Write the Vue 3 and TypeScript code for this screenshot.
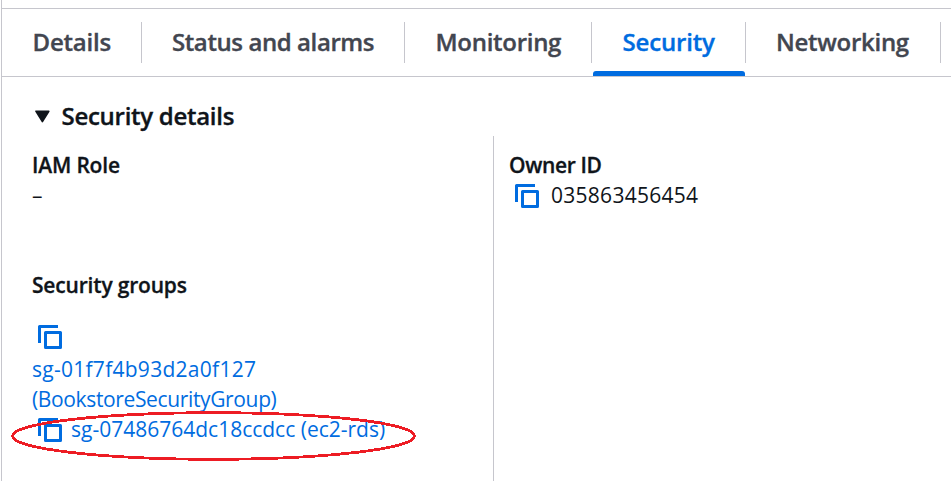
<script setup lang="ts">
import { defineComponent, h } from 'vue'

interface Tab {
  id: string
  label: string
}

const activeTab = 'security'
const tabs: Tab[] = [
  { id: 'details', label: 'Details' },
  { id: 'status', label: 'Status and alarms' },
  { id: 'monitoring', label: 'Monitoring' },
  { id: 'security', label: 'Security' },
  { id: 'networking', label: 'Networking' },
]

const CopyIcon = defineComponent(() => () =>
  h('svg', { width: 24, height: 24, viewBox: '0 0 24 24', fill: 'none', stroke: 'currentColor', 'stroke-width': 3, 'stroke-linejoin': 'round' }, [
    h('path', { d: 'M20 1.5H1.5V18' }),
    h('path', { d: 'M7.5 7.5h15v15h-15z' }),
  ]),
)
</script>

<template>
  <main class="panel">
    <nav class="tabs">
      <div v-for="tab in tabs" :key="tab.id" class="tab" :class="[tab.id, { active: tab.id === activeTab }]">
        <span class="tab-label">{{ tab.label }}</span>
      </div>
    </nav>

    <section class="content">
      <h2 class="section-title">
        <svg class="caret" width="15" height="13" viewBox="0 0 15 13">
          <path d="M1 1.3h12.8L7.4 11.6z" fill="#0f141a" stroke="#0f141a" stroke-width="1.6" stroke-linejoin="round" />
        </svg>
        <span>Security details</span>
      </h2>

      <div class="columns">
        <div class="column">
          <div class="field role">
            <div class="label iam">IAM Role</div>
            <div class="value">–</div>
          </div>
          <div class="field">
            <div class="label groups">Security groups</div>
            <div class="group-list">
              <div class="copy-row"><CopyIcon /></div>
              <a class="link sg-id">sg-01f7f4b93d2a0f127</a>
              <a class="link sg-name">(BookstoreSecurityGroup)</a>
              <div class="group-row">
                <CopyIcon />
                <a class="link sg-inline">sg-07486764dc18ccdcc (ec2-rds)</a>
                <svg class="marker" width="408" height="52" viewBox="0 0 408 52" fill="none">
                  <ellipse cx="204.5" cy="27" rx="201" ry="23.3" stroke="#ed1c24" stroke-width="2.8" shape-rendering="crispEdges" />
                </svg>
              </div>
            </div>
          </div>
        </div>
        <div class="column owner">
          <div class="label owner-label">Owner ID</div>
          <div class="owner-row">
            <CopyIcon />
            <span class="owner-id">035863456454</span>
          </div>
        </div>
      </div>
    </section>
  </main>
</template>

<style>
body {
  margin: 0;
  overflow: hidden;
  background: #fff;
}
</style>

<style scoped>
.panel {
  box-sizing: border-box;
  height: 481px;
  margin-left: 1px;
  padding-top: 8px;
  border-left: 1px solid #c6c6cd;
  font-family: "Open Sans", "Noto Sans", sans-serif;
  font-size: 21px;
  line-height: 30px;
  color: #0f141a;
  white-space: nowrap;
  overflow: hidden;
}
.tabs {
  display: flex;
  box-sizing: border-box;
  height: 69px;
  padding-top: 13px;
  border-top: 1px solid #c6c6cd;
  border-bottom: 1px solid #c6c6cd;
}
.tab {
  position: relative;
  box-sizing: border-box;
  flex: none;
  height: 41px;
  padding: 5px 0 0 30px;
  border-right: 1px solid #c6c6cd;
  font-size: 24px;
  font-weight: 600;
  -webkit-text-stroke: 0.35px currentColor;
  color: #424650;
}
.tab.details { width: 140px; padding-left: 30.5px; letter-spacing: -0.2px; }
.tab.status { width: 263px; letter-spacing: -0.41px; }
.tab.monitoring { width: 187px; padding-left: 30.5px; letter-spacing: -0.28px; }
.tab.security { width: 154px; padding-left: 30.5px; letter-spacing: -0.18px; }
.tab.networking { width: 195px; letter-spacing: -0.28px; }
.tab.active {
  color: #006ce0;
}
.tab.active::after {
  content: "";
  position: absolute;
  left: 1px;
  right: 0;
  bottom: -13px;
  height: 5px;
  border-radius: 3px 3px 0 0;
  background: #006ce0;
}
.content {
  padding: 24px 0 0 30px;
}
.section-title {
  display: flex;
  align-items: center;
  gap: 11.5px;
  margin: 0;
  padding-left: 3px;
  height: 30px;
  font-size: 24px;
  font-weight: 600;
  -webkit-text-stroke: 0.35px currentColor;
  letter-spacing: -0.28px;
}
.columns {
  display: flex;
  margin-top: 5px;
  height: 345px;
}
.column {
  box-sizing: border-box;
  flex: none;
  width: 461px;
  padding-top: 14px;
}
.column.owner {
  border-left: 1px solid #c6c6cd;
  padding-left: 15px;
}
.role {
  height: 120px;
}
.label {
  font-weight: 600;
  -webkit-text-stroke: 0.3px currentColor;
}
.iam { letter-spacing: -0.18px; }
.groups { letter-spacing: -0.18px; }
.owner-label { letter-spacing: -0.35px; }
.group-list {
  display: flex;
  flex-direction: column;
  padding-top: 21px;
}
.copy-row {
  box-sizing: border-box;
  display: flex;
  height: 33px;
  padding: 4px 0 0 6px;
  color: #006ce0;
}
.link {
  color: #006ce0;
}
.sg-id { letter-spacing: 0.27px; }
.sg-name { letter-spacing: -0.36px; }
.sg-inline { letter-spacing: 0; }
.group-row,
.owner-row {
  position: relative;
  display: flex;
  align-items: center;
  height: 30px;
  padding-left: 6px;
  gap: 9px;
  color: #006ce0;
}
.group-row svg:first-child,
.owner-row svg {
  margin-top: 2px;
}
.owner-row {
  gap: 12px;
}
.owner-id {
  color: #0f141a;
  letter-spacing: 0.27px;
}
.marker {
  position: absolute;
  left: -23px;
  top: -5px;
}
</style>
